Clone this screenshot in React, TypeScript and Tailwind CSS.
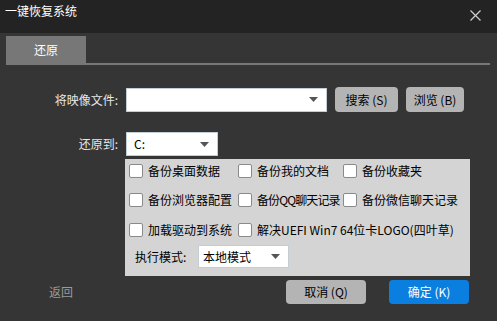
import React from "react";

const font = { fontFamily: '"Noto Sans CJK SC", "Liberation Sans", sans-serif' };

function Caret() {
  return (
    <svg width="9" height="5" viewBox="0 0 9 5" className="shrink-0">
      <path d="M0 0 H9 L4.5 5 Z" fill="#555" />
    </svg>
  );
}

function Check({ label, w, tight }: { label: string; w: string; tight?: boolean }) {
  return (
    <div className={`flex items-center ${w}`}>
      <div className="w-[14px] h-[14px] bg-white border border-[#8a8a8a] rounded-[2px] shrink-0" />
      <span
        className={
          tight
            ? "ml-[5px] whitespace-nowrap text-[12px] leading-none text-black tracking-[-0.9px]"
            : "ml-[5px] whitespace-nowrap text-[12px] leading-none text-black"
        }
      >
        {label}
      </span>
    </div>
  );
}

export default function App() {
  return (
    <div className="w-[497px] h-[321px] bg-[#353535] overflow-hidden flex flex-col" style={font}>
      {/* title bar */}
      <div className="h-[33px] bg-[#232323] flex items-center justify-between pl-[5px] pr-[16px] shrink-0">
        <span className="text-[12px] leading-none text-white -mt-[11px]">一键恢复系统</span>
        <svg width="11" height="11" viewBox="0 0 11 11" className="-mt-[2px]">
          <path d="M0.5 0.5 L10.5 10.5 M10.5 0.5 L0.5 10.5" stroke="#d0d0d0" strokeWidth="1.2" />
        </svg>
      </div>

      {/* tabs */}
      <div className="mt-[3px] pl-[6px]">
        <div className="w-[80px] h-[27px] bg-[#777777] flex items-center justify-center">
          <span className="text-[12px] leading-none text-white">还原</span>
        </div>
        <div className="w-[484px] h-[2px] bg-[#777777]" />
      </div>

      {/* file row */}
      <div className="mt-[22px] flex items-center">
        <div className="w-[118px] text-right text-[12px] leading-none text-[#e8e8e8]">将映像文件:</div>
        <div className="ml-[8px] w-[201px] h-[24px] bg-white border border-[#c4ccd4] flex items-center justify-end pr-[8px]">
          <Caret />
        </div>
        <button className="ml-[8px] w-[63px] h-[25px] bg-[#b4b4b4] rounded-[4px] text-[12px] leading-none text-black flex items-center justify-center">
          搜索 (S)
        </button>
        <button className="ml-[8px] w-[58px] h-[25px] bg-[#b4b4b4] rounded-[4px] text-[12px] leading-none text-black flex items-center justify-center">
          浏览 (B)
        </button>
      </div>

      {/* drive row */}
      <div className="mt-[20px] flex items-center">
        <div className="w-[118px] text-right text-[12px] leading-none text-[#e8e8e8]">还原到:</div>
        <div className="ml-[8px] w-[92px] h-[24px] bg-white border border-[#c4ccd4] flex items-center justify-between pl-[7px] pr-[8px]">
          <span className="text-[12px] leading-none text-black">C:</span>
          <Caret />
        </div>
      </div>

      {/* options panel */}
      <div className="mt-[3px] ml-[125px] w-[345px] h-[117px] bg-[#d4d4d4] flex flex-col pl-[4px] pt-[5px]">
        <div className="flex items-center h-[14px]">
          <Check label="备份桌面数据" w="w-[109px]" />
          <Check label="备份我的文档" w="w-[105px]" />
          <Check label="备份收藏夹" w="w-[100px]" />
        </div>
        <div className="flex items-center h-[14px] mt-[15px]">
          <Check label="备份浏览器配置" w="w-[109px]" />
          <Check label="备份QQ聊天记录" w="w-[105px]" tight />
          <Check label="备份微信聊天记录" w="w-[100px]" />
        </div>
        <div className="flex items-center h-[14px] mt-[16px]">
          <Check label="加载驱动到系统" w="w-[109px]" />
          <Check label="解决UEFI Win7 64位卡LOGO(四叶草)" w="w-[200px]" />
        </div>
        <div className="flex items-center mt-[8px] pl-[6px]">
          <span className="w-[63px] text-[12px] leading-none text-black">执行模式:</span>
          <div className="w-[91px] h-[23px] bg-white border border-[#c4ccd4] flex items-center justify-between pl-[4px] pr-[8px]">
            <span className="text-[12px] leading-none text-black">本地模式</span>
            <Caret />
          </div>
        </div>
      </div>

      {/* bottom row */}
      <div className="mt-[4px] flex items-center">
        <span className="ml-[49px] text-[12px] leading-none text-[#9a9a9a]">返回</span>
        <button className="ml-[213px] w-[80px] h-[24px] bg-[#b4b4b4] rounded-[4px] text-[12px] leading-none text-black flex items-center justify-center">
          取消 (Q)
        </button>
        <button className="ml-[23px] w-[80px] h-[24px] bg-[#0b7fe0] rounded-[4px] text-[12px] leading-none text-white flex items-center justify-center">
          确定 (K)
        </button>
      </div>
    </div>
  );
}
